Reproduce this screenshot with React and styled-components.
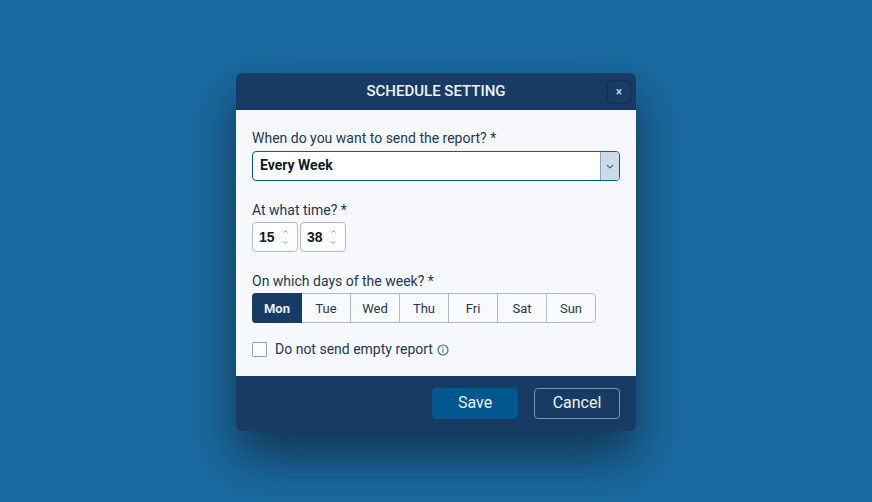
import React from "react";
import styled, { createGlobalStyle } from "styled-components";

const Global = createGlobalStyle`
  html, body { margin: 0; padding: 0; height: 100%; }
  body { font-family: Roboto, "Liberation Sans", sans-serif; background: #1a6aa1; }
  * { box-sizing: border-box; }
`;
const Page = styled.div`
  width: 872px; height: 502px; overflow: hidden; padding-top: 73px;
  display: flex; justify-content: center; align-items: flex-start;
  background: #1a6aa1;
`;
const Dialog = styled.div`
  width: 400px; height: 358px; border-radius: 6px; overflow: hidden;
  display: flex; flex-direction: column;
  box-shadow: 0 25px 50px rgba(18, 48, 72, 0.9);
`;
const Header = styled.div`
  height: 37px; background: #183b66; position: relative; flex: none;
  display: flex; align-items: center; justify-content: center;
  padding-bottom: 2px;
  color: #eef3f9; font-size: 15px; font-weight: 500;
`;
const Close = styled.button`
  position: absolute; right: 5px; top: 7px; width: 24px; height: 24px; padding: 0;
  background: transparent; border: 1px solid #112c50; border-radius: 4px;
  color: #dfe7f1; font-family: inherit; font-size: 12px; line-height: 1;
`;
const Body = styled.div`
  flex: 1; background: #f6f8fd; padding: 20px 16px 0;
  display: flex; flex-direction: column;
`;
const Label = styled.div`
  color: #24384f; font-size: 14px; line-height: 16px; height: 16px;
  margin-bottom: ${p => p.$gap ?? 5}px;
`;
const Select = styled.div`
  height: 30px; width: 368px; display: flex; background: #fff;
  border: 1px solid #075e85; border-radius: 4px; overflow: hidden;
  margin-bottom: 21px;
`;
const SelectValue = styled.div`
  flex: 1; padding-left: 7px; font-size: 14px; font-weight: 700; color: #101a28;
  line-height: 27px;
`;
const SelectArrow = styled.div`
  width: 19px; background: #cddaea; border-left: 1px solid #8da4bf;
  display: flex; align-items: center; justify-content: center;
`;
const TimeRow = styled.div`
  display: flex; gap: 2px; margin-bottom: 21px;
`;
const Spinner = styled.div`
  width: 46px; height: 30px; background: #fff; border: 1px solid #a9bbd0;
  border-radius: 4px; display: flex; align-items: center; justify-content: space-between;
  padding: 0 9px 0 6px; font-family: "Liberation Sans", Arial, sans-serif;
  font-size: 14px; font-weight: 700; color: #101a28;
`;
const Steps = styled.div`
  display: flex; flex-direction: column; gap: 8px;
`;
const StepIcon = styled.svg`
  display: block;
`;
const Days = styled.div`
  display: flex; width: 344px; height: 30px; border: 1px solid #a9bbd0;
  border-radius: 4px; margin-bottom: 18px; background: #f8fafd;
`;
const Day = styled.div`
  flex: ${p => (p.$active ? "0 0 50px" : "1 1 0")};
  margin: ${p => (p.$active ? "-1px 0 -1px -1px" : "0")};
  display: flex; align-items: center; justify-content: center;
  font-size: 13px; font-weight: ${p => (p.$active ? 700 : 400)};
  color: ${p => (p.$active ? "#e8eef6" : "#24384f")};
  background: ${p => (p.$active ? "#183b66" : "transparent")};
  border-radius: ${p => (p.$active ? "4px 0 0 4px" : "0")};
  border-right: ${p => (p.$last || p.$active ? "none" : "1px solid #a9bbd0")};
`;
const CheckRow = styled.div`
  display: flex; align-items: center; color: #24384f; font-size: 14px;
`;
const Box = styled.div`
  width: 15px; height: 15px; background: #fff; border: 1px solid #8da4bf;
  border-radius: 1px; margin-right: 8px;
`;
const Info = styled.svg`
  margin-left: 4px; margin-top: 2px;
`;
const Footer = styled.div`
  height: 55px; flex: none; background: #183b66;
  display: flex; justify-content: flex-end; align-items: flex-start; gap: 16px;
  padding: 12px 16px 0 0;
`;
const Button = styled.button`
  width: 86px; height: 31px; padding: 0 0 3px; border-radius: 4px; font-family: inherit; font-size: 16px;
  color: #eef3f9;
  background: ${p => (p.$primary ? "#03578f" : "transparent")};
  border: 1px solid ${p => (p.$primary ? "#03578f" : "#7d93ae")};
`;

const Chevrons = () => (
  <Steps>
    <StepIcon width="5" height="3" viewBox="0 0 5 3"><path d="M.5 2.5 2.5.7l2 1.8" fill="none" stroke="#7f8c9c" strokeWidth=".9" /></StepIcon>
    <StepIcon width="5" height="3" viewBox="0 0 5 3"><path d="M.5.5l2 1.8 2-1.8" fill="none" stroke="#7f8c9c" strokeWidth=".9" /></StepIcon>
  </Steps>
);

const days = ["Mon", "Tue", "Wed", "Thu", "Fri", "Sat", "Sun"];

export default function App() {
  return (
    <Page>
      <Global />
      <Dialog>
        <Header>
          SCHEDULE SETTING
          <Close>×</Close>
        </Header>
        <Body>
          <Label>When do you want to send the report? *</Label>
          <Select>
            <SelectValue>Every Week</SelectValue>
            <SelectArrow>
              <svg width="8" height="5" viewBox="0 0 8 5"><path d="M1 1l3 3 3-3" fill="none" stroke="#2f6d9c" strokeWidth="1.1" /></svg>
            </SelectArrow>
          </Select>
          <Label $gap={4}>At what time? *</Label>
          <TimeRow>
            <Spinner>15<Chevrons /></Spinner>
            <Spinner>38<Chevrons /></Spinner>
          </TimeRow>
          <Label $gap={4}>On which days of the week? *</Label>
          <Days>
            {days.map((d, i) => (
              <Day key={d} $active={i === 0} $last={i === days.length - 1}>{d}</Day>
            ))}
          </Days>
          <CheckRow>
            <Box />
            Do not send empty report
            <Info width="12" height="12" viewBox="0 0 12 12">
              <circle cx="6" cy="6" r="5" fill="none" stroke="#2a7cab" strokeWidth="1.2" />
              <path d="M6 5.2v3.6M6 3v1.2" stroke="#2a7cab" strokeWidth="1.2" />
            </Info>
          </CheckRow>
        </Body>
        <Footer>
          <Button $primary>Save</Button>
          <Button>Cancel</Button>
        </Footer>
      </Dialog>
    </Page>
  );
}
